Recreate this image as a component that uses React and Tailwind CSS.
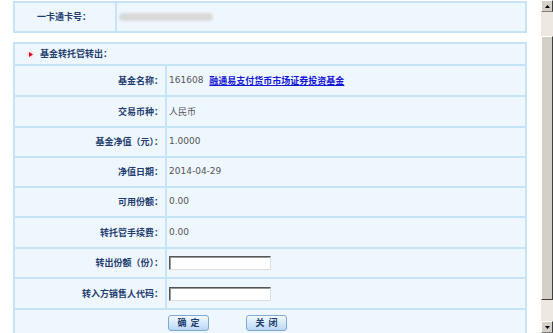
import React from "react";

const cjk = { fontFamily: '"Noto Sans CJK SC", "DejaVu Sans", sans-serif' };
const num = { fontFamily: '"DejaVu Sans", "Noto Sans CJK SC", sans-serif' };

function Row({ label, h, children }) {
  return (
    <div
      className={`shrink-0 grid grid-cols-[152px_1fr] border-t-2 border-[#c7e3f8] ${h}`}
    >
      <div
        className="flex items-center justify-end pr-[2px] text-[9px] font-bold text-[#1f3d6e] border-r-2 border-[#c7e3f8]"
        style={cjk}
      >
        {label}
      </div>
      <div className="flex items-center pl-[2px] text-[9px] text-[#555]">{children}</div>
    </div>
  );
}

function Input() {
  return (
    <div className="w-[102px] h-[14px] bg-white border border-t-[#555] border-l-[#555] border-r-[#ddd] border-b-[#ddd] shadow-[inset_1px_1px_0_#999]" />
  );
}

function Btn({ children }) {
  return (
    <div
      className="w-[41px] h-[16px] rounded-[3px] border border-[#7fa8d6] bg-gradient-to-b from-[#f3f9ff] via-[#d6e9fb] to-[#b9d7f4] flex items-center justify-center text-[9px] font-bold text-[#1f3d6e] tracking-[4px] pl-[4px]"
      style={cjk}
    >
      {children}
    </div>
  );
}

export default function App() {
  return (
    <div className="w-[553px] h-[333px] bg-white flex overflow-hidden" style={cjk}>
      <div className="w-[541px] shrink-0 pl-[13px] pr-[14px] flex flex-col">
        {/* Card number panel */}
        <div className="shrink-0 mt-[1px] h-[32px] border-2 border-[#c7e3f8] bg-[#eff7fe] grid grid-cols-[102px_1fr]">
          <div className="flex items-center justify-center border-r-2 border-[#c7e3f8] text-[9px] font-bold text-[#1f3d6e] pr-[2px]">
            一卡通卡号：
          </div>
          <div className="flex items-center pl-[2px]">
            <div className="w-[94px] h-[8px] rounded-full bg-[#d9d9d9] blur-[1px]" />
          </div>
        </div>

        {/* Transfer panel */}
        <div className="shrink-0 mt-[9px] border-2 border-t-0 border-[#c7e3f8] bg-[#eff7fe] flex flex-col">
          <div className="shrink-0 h-[22px] border-t-2 border-[#c7e3f8] flex items-center pl-[12px] gap-[6px]">
            <div className="w-[7px] h-[7px] rounded-full bg-[#fbe3ea] flex items-center justify-center">
              <svg width="4" height="5" viewBox="0 0 4 5">
                <polygon points="0,0 4,2.5 0,5" fill="#e0001b" />
              </svg>
            </div>
            <span className="text-[9px] font-bold text-[#1f3d6e]">基金转托管转出：</span>
          </div>
          <Row label="基金名称：" h="h-[31px]">
            <span style={num} className="text-[9px] text-[#555] mr-[6px]">161608</span>
            <span className="text-[9px] font-bold text-[#1414d6] underline decoration-[#1414d6]">
              融通易支付货币市场证券投资基金
            </span>
          </Row>
          <Row label="交易币种：" h="h-[31px]">
            <span className="text-[9px] text-[#555]">人民币</span>
          </Row>
          <Row label="基金净值（元）：" h="h-[30px]">
            <span style={num} className="text-[9px] text-[#555]">1.0000</span>
          </Row>
          <Row label="净值日期：" h="h-[30px]">
            <span style={num} className="text-[9px] text-[#555]">2014-04-29</span>
          </Row>
          <Row label="可用份额：" h="h-[30px]">
            <span style={num} className="text-[9px] text-[#555]">0.00</span>
          </Row>
          <Row label="转托管手续费：" h="h-[31px]">
            <span style={num} className="text-[9px] text-[#555]">0.00</span>
          </Row>
          <Row label="转出份额（份）：" h="h-[30px]">
            <Input />
          </Row>
          <Row label="转入方销售人代码：" h="h-[31px]">
            <Input />
          </Row>
          <div className="shrink-0 h-[28px] border-t-2 border-[#c7e3f8] flex items-start pt-[5px] pl-[153px] gap-[37px]">
            <Btn>确定</Btn>
            <Btn>关闭</Btn>
          </div>
        </div>
      </div>

      {/* Scrollbar */}
      <div className="w-[12px] shrink-0 h-[333px] flex flex-col bg-[#ece9e2]">
        <div className="shrink-0 h-[12px] bg-[#d4d0c8] border border-t-white border-l-white border-r-[#404040] border-b-[#808080] flex items-center justify-center">
          <svg width="5" height="3" viewBox="0 0 5 3">
            <polygon points="2.5,0 5,3 0,3" fill="#000" />
          </svg>
        </div>
        <div className="shrink-0 h-[24px]" />
        <div className="shrink-0 h-[264px] bg-[#d4d0c8] border border-t-white border-l-white border-r-[#404040] border-b-[#404040]" />
        <div className="flex-1" />
        <div className="shrink-0 h-[12px] bg-[#d4d0c8] border border-t-white border-l-white border-r-[#404040] border-b-[#808080] flex items-center justify-center">
          <svg width="5" height="3" viewBox="0 0 5 3">
            <polygon points="0,0 5,0 2.5,3" fill="#000" />
          </svg>
        </div>
      </div>
    </div>
  );
}
